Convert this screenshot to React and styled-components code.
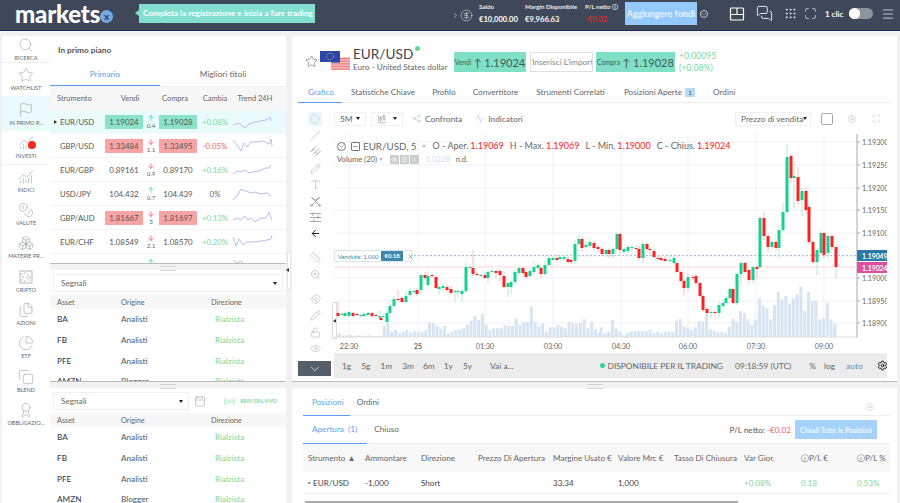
import React from "react";
import styled, { createGlobalStyle } from "styled-components";
import {
  Search, Star, Flag, ChartNoAxesCombined, Coins, Boxes, Files, PieChart, Copy, Award,
  Calendar, Settings, Eye, LockOpen, Magnet, ZoomIn, Ruler, ArrowLeft, ArrowUp, ArrowDown, Type,
  ChevronDown, Maximize, X, Menu, MessagesSquare, Grip, CandlestickChart,
  Share2, Activity, Crosshair, Slash, CircleDollarSign,
  ChevronRight, Radio, Pencil, Minus,
} from "lucide-react";

const GlobalStyle = createGlobalStyle`
  html, body { margin: 0; padding: 0; background: #f1f1f1; }
  body { font-family: Lato, "Liberation Sans", sans-serif; color: #555; }
  * { box-sizing: border-box; }
`;

const BLUE = "#5a9ff5";
const GREEN = "#7ad89b";
const RED = "#f25f5f";

const Page = styled.div`
  width: 900px;
  height: 503px;
  overflow: hidden;
  display: flex;
  flex-direction: column;
`;

/* ---------- top bar ---------- */
const TopBar = styled.header`
  height: 31px;
  flex: none;
  display: flex;
  align-items: center;
  background: #3e4858;
  border-bottom: 1px solid #1b2a52;
  color: #fff;
`;
const Logo = styled.div`
  width: 126px;
  margin-left: 15px;
  margin-top: -3px;
  display: flex;
  align-items: center;
  font-size: 24px;
  font-weight: 900;
  letter-spacing: -0.2px;
  line-height: 26px;
`;
const LogoX = styled.span`
  width: 13px;
  height: 13px;
  margin: 5px 0 0 0;
  border-radius: 50%;
  background: #74a9e6;
  color: #33405a;
  font-size: 10px;
  line-height: 12px;
  text-align: center;
  font-weight: 900;
`;
const Hint = styled.div`
  position: relative;
  width: 176px;
  height: 19px;
  margin-left: -2px;
  margin-top: -4px;
  background: #82dfd0;
  font-size: 8.2px;
  font-weight: 700;
  line-height: 19px;
  padding-left: 4px;
  white-space: nowrap;
  &::before {
    content: "";
    position: absolute;
    left: -4px;
    top: 6px;
    border: 3.5px solid transparent;
    border-left: 0;
    border-right: 4px solid #82dfd0;
  }
`;
const Account = styled.div`
  margin-left: 137px;
  display: flex;
  align-items: center;
  color: #e9ecef;
`;
const Stat = styled.div`
  width: ${(p) => p.$w}px;
  font-size: 6.2px;
  font-weight: 700;
  line-height: 11px;
  white-space: nowrap;
  margin-top: -3px;
`;
const StatValue = styled.div`
  font-size: 7.6px;
  line-height: 13px;
  margin-top: 1px;
  color: ${(p) => p.$c || "#fff"};
`;
const FundButton = styled.button`
  width: 72px;
  height: 23px;
  margin-top: -3px;
  border: 0;
  padding: 0;
  background: #94c9fb;
  color: #e8f4ff;
  font: 700 9px Lato, sans-serif;
  white-space: nowrap;
`;
const TopIcons = styled.div`
  display: flex;
  align-items: center;
  margin-top: -3px;
`;
const IconSlot = styled.span`
  display: inline-flex;
  margin-left: ${(p) => p.$ml}px;
`;
const Ring = styled.span`
  display: inline-flex;
  width: ${(p) => p.$s || 8}px;
  height: ${(p) => p.$s || 8}px;
  margin-left: ${(p) => p.$ml || 0}px;
  margin-right: ${(p) => p.$mr || 0}px;
  align-items: center;
  justify-content: center;
  border: 1px solid ${(p) => p.$c || "#ccc"};
  border-radius: ${(p) => p.$r || "50%"};
  flex: none;
`;
const OneClick = styled.span`
  margin-left: 8px;
  font-size: 8px;
  font-weight: 700;
  white-space: nowrap;
`;
const Toggle = styled.span`
  position: relative;
  width: 24px;
  height: 11px;
  margin-left: 6px;
  border-radius: 6px;
  background: #8e949c;
  &::after {
    content: "";
    position: absolute;
    left: 0;
    top: 0;
    width: 11px;
    height: 11px;
    border-radius: 50%;
    background: #fff;
  }
`;

/* ---------- layout ---------- */
const Main = styled.main`
  flex: 1;
  display: flex;
  padding: 5px 3px 0 2px;
  min-height: 0;
`;
const SideNav = styled.nav`
  width: 48px;
  flex: none;
  background: #fff;
`;
const NavItem = styled.div`
  height: ${(p) => p.$h || 33.3}px;
  position: relative;
  display: flex;
  flex-direction: column;
  align-items: center;
  justify-content: flex-end;
  padding-bottom: ${(p) => p.$pb ?? 4}px;
  background: ${(p) => (p.$active ? "#e9fbfb" : "#fff")};
  border-bottom: ${(p) => (p.$line ? "1px solid #f0f0f0" : "0")};
  color: #a4a8ac;
`;
const NavLabel = styled.span`
  font-size: 5.6px;
  line-height: 9px;
  margin-top: 0;
  color: #666;
  white-space: nowrap;
`;
const RedDot = styled.span`
  position: absolute;
  left: 26px;
  top: 10px;
  width: 8px;
  height: 8px;
  border-radius: 50%;
  background: #ec2c1f;
`;
const LeftCol = styled.section`
  width: 236px;
  flex: none;
  display: flex;
  flex-direction: column;
  position: relative;
`;
const Block = styled.div`
  height: ${(p) => p.$h}px;
  flex: none;
  overflow: hidden;
  background: #fff;
`;
const Splitter = styled.div`
  height: 7px;
  flex: none;
  position: relative;
  background: #f2f2f2;
  border-top: 1px solid #bcbcbc;
  &::after {
    content: "";
    position: absolute;
    left: 50%;
    top: 2px;
    width: 16px;
    height: 3px;
    margin-left: -8px;
    border-top: 1px solid #d4d4d4;
    border-bottom: 1px solid #d4d4d4;
  }
`;
const Collapse = styled.div`
  position: absolute;
  left: 237px;
  top: 216px;
  width: 4px;
  height: 37px;
  background: #fff;
  border: 1px solid #e6e6e6;
  &::after {
    content: "";
    position: absolute;
    left: -2px;
    top: 15px;
    border: 2px solid transparent;
    border-right: 3px solid #333;
    border-left: 0;
  }
`;
const BlockTitle = styled.div`
  height: 28px;
  padding: 9px 8px 0;
  font-size: 8.3px;
  font-weight: 700;
  color: #555;
`;
const TabsTwo = styled.div`
  height: 23px;
  display: flex;
  border-bottom: 1px solid #f0f0f0;
`;
const TabHalf = styled.div`
  width: ${(p) => p.$w}px;
  text-align: center;
  font-size: 8.3px;
  line-height: 21px;
  color: ${(p) => (p.$on ? BLUE : "#666")};
  border-bottom: ${(p) => (p.$on ? `1.5px solid ${BLUE}` : "0")};
`;
const QuoteHead = styled.div`
  height: 23px;
  display: grid;
  grid-template-columns: 55px 50px 40px 40px 40px;
  align-items: center;
  background: #f7f7f7;
  font-size: 7.5px;
  color: #666;
  text-align: center;
  span:first-child { text-align: left; padding-left: 7px; }
`;
const QuoteRow = styled.div`
  height: 24px;
  display: grid;
  grid-template-columns: 55px 38px 16px 38px 36px 43px;
  align-items: center;
  text-align: center;
  background: ${(p) => (p.$active ? "#e9fbfb" : "#fff")};
  border-bottom: 1px solid #f6f6f6;
  position: relative;
`;
const Symbol = styled.span`
  text-align: left;
  padding-left: 10px;
  font-size: 7.7px;
  position: relative;
  ${(p) =>
    p.$active &&
    `&::before {
      content: "";
      position: absolute;
      left: 4px;
      top: 3px;
      border: 2px solid transparent;
      border-left: 3px solid #333;
      border-right: 0;
    }`}
`;
const Price = styled.span`
  height: 14px;
  line-height: 14px;
  font-size: 7.9px;
  background: ${(p) => (p.$kind === "up" ? "#8be2c7" : p.$kind === "down" ? "#f9a4a4" : "transparent")};
`;
const Delta = styled.span`
  display: flex;
  flex-direction: column;
  align-items: center;
  font-size: 6.2px;
  line-height: 8px;
  color: ${(p) => p.$c};
`;
const DeltaNum = styled.span`
  color: #666;
`;
const Change = styled.span`
  font-size: 7.8px;
  color: ${(p) => p.$c};
`;
const SelectBox = styled.div`
  height: 18px;
  width: ${(p) => p.$w}px;
  padding: 0 5px 0 7px;
  display: flex;
  align-items: center;
  justify-content: space-between;
  border: 1px solid #f0f0f0;
  font-size: 8.2px;
  color: #666;
  flex: none;
`;
const Caret = styled.span`
  width: 0;
  height: 0;
  border: 2.5px solid transparent;
  border-top: 3px solid #222;
  border-bottom: 0;
`;
const SignalHead = styled.div`
  height: 14px;
  display: grid;
  grid-template-columns: 64px 90px 1fr;
  align-items: center;
  padding-left: 7px;
  background: #f7f7f7;
  font-size: 7.3px;
  color: #666;
`;
const SignalRow = styled.div`
  height: 20.7px;
  display: grid;
  grid-template-columns: 64px 94px 1fr;
  align-items: center;
  padding-left: 7px;
  font-size: 8.2px;
  color: #555;
`;
const Ticker = styled.span`
  font-weight: 500;
  color: #3d4450;
`;
const Good = styled.span`
  color: ${GREEN};
`;
const SelectRow = styled.div`
  display: flex;
  align-items: center;
  padding: 4px 0 3px 3px;
`;
const Live = styled.span`
  display: flex;
  align-items: center;
  margin-left: 17px;
  gap: 4px;
  font-size: 5px;
  font-weight: 700;
  color: ${GREEN};
  white-space: nowrap;
`;

/* ---------- right side ---------- */
const RightCol = styled.section`
  width: 605px;
  margin-left: 6px;
  flex: none;
  display: flex;
  flex-direction: column;
  background: #fff;
`;
const Upper = styled.div`
  height: 345px;
  flex: none;
`;
const InstrumentHead = styled.div`
  height: 50px;
  display: flex;
  align-items: center;
  padding: 0 0 0 13px;
`;
const NameBlock = styled.div`
  width: 101px;
  margin-left: 3px;
  margin-top: -3px;
`;
const PairName = styled.div`
  font-size: 13.6px;
  line-height: 16px;
  color: #444;
  position: relative;
`;
const LiveDot = styled.span`
  position: absolute;
  left: 62px;
  top: 0;
  width: 5px;
  height: 5px;
  border-radius: 50%;
  background: #63d98f;
`;
const PairSub = styled.div`
  font-size: 8.2px;
  line-height: 11px;
  color: #666;
  white-space: nowrap;
`;
const TradeBox = styled.div`
  width: ${(p) => p.$w}px;
  height: 20px;
  margin-left: ${(p) => p.$ml}px;
  margin-top: 2px;
  background: #7fe0c5;
  display: flex;
  align-items: center;
  justify-content: center;
  gap: 2px;
  font-size: 11px;
  color: #3f5a57;
  white-space: nowrap;
`;
const TradeLabel = styled.span`
  font-size: 6.6px;
`;
const AmountInput = styled.div`
  width: 63px;
  height: 20px;
  margin-left: 4px;
  margin-top: 2px;
  border: 1px solid #e0e0e0;
  overflow: hidden;
  white-space: nowrap;
  font-size: 8.4px;
  line-height: 18px;
  padding-left: 1px;
  color: #888;
`;
const Diff = styled.div`
  margin-left: 4px;
  margin-top: 2px;
  font-size: 8.7px;
  line-height: 12.5px;
  color: ${GREEN};
`;
const MainTabs = styled.div`
  height: 17px;
  margin: 0 7px 0 6px;
  display: flex;
  border-bottom: 1px solid #eeeeee;
`;
const MainTab = styled.div`
  height: 17px;
  margin-right: ${(p) => p.$mr}px;
  padding: 0 ${(p) => (p.$on ? 8 : 0)}px 0 ${(p) => (p.$on ? 10 : 0)}px;
  font-size: 8.2px;
  line-height: 12px;
  white-space: nowrap;
  color: ${(p) => (p.$on ? BLUE : "#666")};
  border-bottom: ${(p) => (p.$on ? `1.5px solid ${BLUE}` : "0")};
`;
const Badge = styled.span`
  display: inline-block;
  width: 10px;
  height: 9px;
  margin-left: 3px;
  background: #b7dcf8;
  font-size: 6.5px;
  line-height: 9px;
  text-align: center;
  color: #456;
`;
const ChartTools = styled.div`
  height: 31px;
  display: flex;
  align-items: center;
  padding: 0 16px;
  font-size: 8.4px;
  color: #666;
`;
const CrossBox = styled.span`
  width: 14px;
  height: 14px;
  background: #eaf7fa;
  color: #bcd;
  display: inline-flex;
  align-items: center;
  justify-content: center;
`;
const ToolSelect = styled.span`
  width: ${(p) => p.$w}px;
  height: 14px;
  margin-left: ${(p) => p.$ml}px;
  padding: 0 5px;
  display: inline-flex;
  align-items: center;
  justify-content: space-between;
  border: 1px solid #f0f0f0;
  white-space: nowrap;
  flex: none;
`;
const ToolLink = styled.span`
  display: inline-flex;
  align-items: center;
  gap: 4px;
  margin-left: ${(p) => p.$ml}px;
  white-space: nowrap;
  color: #a0a4a8;
`;
const ToolText = styled.span`
  color: #666;
`;
const Spacer = styled.span`
  flex: 1;
`;
const SquareBtn = styled.span`
  width: 12px;
  height: 12px;
  margin-left: 10px;
  border: 1px solid #aaa;
  border-radius: 2px;
  flex: none;
`;
const ChartRow = styled.div`
  height: 219px;
  display: flex;
`;
const DrawTools = styled.div`
  width: 42px;
  flex: none;
  padding-left: 18px;
  position: relative;
`;
const DrawTool = styled.div`
  height: ${(p) => p.$h || 16.4}px;
  display: flex;
  align-items: flex-end;
  color: ${(p) => p.$c || "#9a9ea3"};
`;
const HandleTab = styled.div`
  position: absolute;
  right: -3px;
  top: 168px;
  width: 5px;
  height: 37px;
  background: #fff;
  border: 1px solid #ddd;
  &::after {
    content: "";
    position: absolute;
    left: 0;
    top: 16px;
    border: 2px solid transparent;
    border-right: 3px solid #333;
    border-left: 0;
  }
`;
const ChartBox = styled.div`
  position: relative;
  width: 553px;
  height: 219px;
  flex: none;
`;
const Legend = styled.div`
  position: absolute;
  left: 3px;
  top: 5px;
  display: flex;
  align-items: center;
  font-size: 9px;
  line-height: 14px;
  color: #666;
  white-space: nowrap;
`;
const LegendName = styled.span`
  font-size: 9.8px;
  margin: 0 3px 0 3px;
`;
const LegendCaret = styled.span`
  width: 0;
  height: 0;
  margin: 0 ${(p) => p.$mr}px 0 2px;
  border: 2px solid transparent;
  border-top: 3px solid #bbb;
  border-bottom: 0;
`;
const LegendRed = styled.span`
  color: #f22;
  margin: 0 6px 0 2px;
`;
const VolumeLine = styled.div`
  position: absolute;
  left: 3px;
  top: 20px;
  display: flex;
  align-items: center;
  font-size: 7.6px;
  line-height: 10px;
  color: #666;
  white-space: nowrap;
`;
const MiniBtn = styled.span`
  width: 9px;
  height: 9px;
  margin-right: 1px;
  background: #c9cbce;
  color: #fff;
  display: inline-flex;
  align-items: center;
  justify-content: center;
`;
const OrderTag = styled.div`
  position: absolute;
  left: 0;
  top: 116px;
  width: 78px;
  height: 12px;
  display: flex;
  align-items: center;
  background: #fff;
  border: 1px solid #d7e6ef;
  font-size: 6px;
  color: #4a85a8;
  white-space: nowrap;
  padding-left: 3px;
`;
const OrderProfit = styled.span`
  margin-left: 3px;
  height: 10px;
  line-height: 10px;
  padding: 0 3px;
  background: #3f87ad;
  color: #fff;
  font-weight: 700;
`;
const RangeRow = styled.div`
  height: 25px;
  display: flex;
`;
const CollapseBtn = styled.div`
  width: 33px;
  height: 15px;
  margin: 8px 0 0 6px;
  flex: none;
  background: #565e6c;
  color: #fff;
  display: flex;
  align-items: center;
  justify-content: center;
`;
const RangeBar = styled.div`
  margin-left: 3px;
  width: 553px;
  height: 25px;
  flex: none;
  background: #ececec;
  display: flex;
  align-items: center;
  font-size: 8.4px;
  color: #666;
  white-space: nowrap;
`;
const RangeItem = styled.span`
  margin-left: ${(p) => p.$ml}px;
  color: ${(p) => p.$c || "#666"};
`;
const Available = styled.span`
  margin-left: ${(p) => p.$ml}px;
  display: inline-flex;
  align-items: center;
  gap: 3px;
  &::before {
    content: "";
    width: 5px;
    height: 5px;
    border-radius: 50%;
    background: #2ed09b;
  }
`;
const Lower = styled.div`
  flex: 1;
  min-height: 0;
  padding: 0 7px 0 11px;
  position: relative;
`;
const PosTabs = styled.div`
  height: 23px;
  margin-top: 5px;
  display: flex;
  align-items: flex-start;
  border-bottom: 1px solid #eeeeee;
  position: relative;
`;
const PosTab = styled.div`
  height: 23px;
  padding: 3px 6px 0 ${(p) => (p.$on ? 9 : 7)}px;
  font-size: 8.2px;
  line-height: 12px;
  color: ${(p) => (p.$on ? BLUE : "#666")};
  border-bottom: ${(p) => (p.$on ? `1.5px solid ${BLUE}` : "0")};
`;
const PosGear = styled.span`
  position: absolute;
  right: 15px;
  top: 3px;
  color: #bbb;
`;
const SubTabs = styled.div`
  height: 28px;
  display: flex;
  align-items: center;
  border-bottom: 1px solid #eeeeee;
`;
const SubTab = styled.div`
  height: 28px;
  line-height: 27px;
  padding: 0 10px 0 ${(p) => (p.$on ? 9 : 7)}px;
  font-size: 8.2px;
  white-space: pre;
  color: ${(p) => (p.$on ? BLUE : "#666")};
  border-bottom: ${(p) => (p.$on ? `1.5px solid ${BLUE}` : "0")};
`;
const NetPl = styled.div`
  margin-left: auto;
  font-size: 8.2px;
  white-space: nowrap;
`;
const NetPlValue = styled.span`
  color: ${RED};
`;
const CloseAll = styled.button`
  width: 82px;
  height: 19px;
  margin: 0 13px 0 4px;
  padding: 0;
  border: 0;
  background: #a5d2fb;
  color: #f0f8ff;
  font: 700 6.8px Lato, sans-serif;
  white-space: nowrap;
`;
const PosHead = styled.div`
  height: 28px;
  display: grid;
  grid-template-columns: 57px 56px 57px 75px 65px 56px 70px 57px 56px 60px;
  align-items: center;
  padding-left: 5px;
  background: #f8f8f8;
  font-size: 8.1px;
  color: #666;
  white-space: nowrap;
  overflow: hidden;
`;
const PosRow = styled.div`
  height: 22px;
  display: grid;
  grid-template-columns: 57px 56px 57px 75px 65px 56px 70px 57px 56px 60px;
  align-items: center;
  padding-left: 5px;
  border-bottom: 1px solid #f0f0f0;
  font-size: 8.1px;
  color: #444;
  white-space: nowrap;
`;
const Scroll = styled.div`
  width: 433px;
  height: 2px;
  margin: 7px 0 0 2px;
  background: #a9a9a9;
`;

/* ---------- small drawn icons ---------- */
function CryptoIcon({ size = 16 }) {
  return (
    <svg width={size} height={size} viewBox="0 0 16 16" fill="none" stroke="currentColor" strokeWidth="0.8">
      <rect x="2" y="2" width="12" height="12" />
      {[[4, 5], [7, 4], [10, 6], [5, 8], [9, 9], [12, 8], [4, 11], [7, 12], [11, 11]].map(([x, y]) => (
        <circle key={`${x}-${y}`} cx={x} cy={y} r="0.6" fill="#666" stroke="none" />
      ))}
    </svg>
  );
}

function ChannelIcon() {
  return (
    <svg width="11" height="11" viewBox="0 0 11 11" fill="none" stroke="currentColor" strokeWidth="0.9">
      <path d="M0.5 6 6 0.5M3 8.5 9 2.5M5 10.5 10.5 5M2 3l1.5 1.5M5.5 6 7 7.5" />
    </svg>
  );
}

function PatternIcon() {
  return (
    <svg width="11" height="11" viewBox="0 0 11 11" fill="none" stroke="currentColor" strokeWidth="0.9">
      <path d="M1.5 1.5 9.5 9.5M9.5 1.5 1.5 9.5M1.5 1.5 5.5 4 9.5 1.5" />
      <circle cx="1.5" cy="9.5" r="1" />
      <circle cx="9.5" cy="9.5" r="1" />
    </svg>
  );
}

function FibIcon() {
  return (
    <svg width="11" height="11" viewBox="0 0 11 11" fill="none" stroke="currentColor" strokeWidth="0.9">
      <path d="M0 1.5H11M0 5.5H11M0 9.5H11M3 0.5V4M8 3V7M4 7V10.5" />
    </svg>
  );
}

function LayoutIcon() {
  return (
    <svg width="16" height="16" viewBox="0 0 16 16" fill="none" stroke="currentColor" strokeWidth="1.2">
      <rect x="1.5" y="2" width="13" height="12" rx="1" />
      <path d="M1.5 8.5H14.5M8 2V8.5" />
    </svg>
  );
}

const navItems = [
  { label: "WATCHLIST", Icon: Star },
  { label: "IN PRIMO P...", Icon: Flag, active: true, h: 35 },
  { label: "INVESTI", Icon: ChartNoAxesCombined, dot: true, line: true },
  { label: "INDICI", Icon: ChartNoAxesCombined },
  { label: "VALUTE", Icon: Coins },
  { label: "MATERIE PR...", Icon: Boxes },
  { label: "CRIPTO", Icon: CryptoIcon },
  { label: "AZIONI", Icon: Files },
  { label: "ETF", Icon: PieChart },
  { label: "BLEND", Icon: Copy },
  { label: "OBBLIGAZIO...", Icon: Award },
];

const quotes = [
  { s: "EUR/USD", sell: "1.19024", buy: "1.19028", kind: "up", dir: 1, d: "0.4", c: "+0.08%", cc: GREEN, active: true, spark: "0,11 6,9 12,14 16,10 22,8 28,7 33,6 37,3 38,7" },
  { s: "GBP/USD", sell: "1.33484", buy: "1.33495", kind: "down", dir: -1, d: "1.1", c: "-0.05%", cc: RED, spark: "0,2 4,7 8,13 11,5 14,9 18,4 24,4 30,3 36,6 38,1 39,8" },
  { s: "EUR/GBP", sell: "0.89161", buy: "0.89170", dir: -1, d: "0.9", c: "+0.16%", cc: GREEN, spark: "0,12 4,9 8,10 12,8 16,11 20,10 26,9 32,6 36,6 38,3" },
  { s: "USD/JPY", sell: "104.432", buy: "104.439", dir: 1, d: "0.7", c: "0%", cc: "#666", spark: "0,14 4,10 8,3 13,5 18,7 22,6 28,8 34,7 38,10" },
  { s: "GBP/AUD", sell: "1.81667", buy: "1.81697", kind: "down", dir: -1, d: "3", c: "+0.13%", cc: GREEN, spark: "0,10 4,8 8,10 12,6 15,10 18,8 22,12 28,8 33,8 36,2 39,10" },
  { s: "EUR/CHF", sell: "1.08549", buy: "1.08570", dir: -1, d: "2.1", c: "+0.20%", cc: GREEN, spark: "0,3 3,12 6,5 10,11 14,8 20,8 28,7 34,6 38,5 39,1" },
  { s: "AUD/CAD", sell: "0.95540", buy: "0.95560", dir: 1, d: "0.7", c: "-0.09%", cc: RED, spark: "0,2 4,5 8,3 12,7 16,5 22,9 30,10 38,12" },
];

const signals = [
  ["BA", "Analisti"],
  ["FB", "Analisti"],
  ["PFE", "Analisti"],
  ["AMZN", "Blogger"],
];

const columns = ["Ammontare", "Direzione", "Prezzo Di Apertura", "Margine Usato €", "Valore Mrc €", "Tasso Di Chiusura", "Var Gior."];

// x, top, bottom, colour (g/r), wick high, wick low
const candles = [
  [338,313,316,"r",302,317],[342,314,315,"g",312,316],[345,313,316,"g",311,317],[349,312,316,"g",311,317],[353,313,316,"r",312,317],[357,314,315,"r",313,316],[361,315,316,"g",313,317],[364,314,316,"g",312,317],[368,313,315,"g",312,316],[372,313,316,"r",312,318],[376,315,316,"r",314,317],
  [380,316,318,"g",310,319],[383,316,317,"g",314,318],[387,313,322,"g",310,325],[381,318,320,"r",316,321],[390,306,313,"g",303,315],[394,299,306,"g",296,308],[398,299,300,"r",290,301],[402,298,302,"r",296,303],[406,296,302,"g",292,304],[410,291,295,"g",288,298],[414,291,292,"g",288,293],[417,290,294,"r",288,296],[421,275,290,"g",274,293],[425,275,278,"r",272,280],[428,276,285,"g",271,287],[432,275,276,"r",273,278],[436,277,288,"r",275,290],[439,287,289,"g",285,294],[443,286,288,"g",284,291],[447,287,290,"r",285,292],[451,289,293,"r",286,295],[455,291,292,"g",290,302],[458,291,292,"g",290,298],[462,291,294,"g",289,302],[466,267,291,"g",262,293],[470,267,268,"g",264,270],[473,268,274,"r",250,276],[477,274,275,"r",272,276],[481,275,276,"g",274,277],[485,275,278,"r",272,279],[488,272,278,"g",270,283],[492,271,272,"g",269,274],[496,271,273,"r",270,279],[500,271,275,"r",269,282],[504,276,287,"r",272,288],[508,283,287,"g",282,297],[511,282,287,"g",280,294],[515,272,282,"g",270,284],[519,268,273,"g",266,276],[523,268,273,"r",267,275],[526,272,277,"r",270,279],[530,271,276,"g",270,278],[534,267,272,"g",261,275],[538,265,268,"g",263,270],[541,268,274,"r",266,278],[545,265,274,"g",262,276],[549,258,265,"g",256,266],[553,258,260,"g",256,261],[557,258,260,"r",255,262],[560,257,259,"g",255,261],[564,257,259,"g",255,261],[568,259,262,"r",257,264],[571,260,262,"r",259,264],
  [575,244,261,"g",240,264],[579,239,244,"g",234,246],[582,239,248,"r",236,252],[586,245,247,"g",242,249],[590,242,246,"g",240,248],[594,243,248,"r",241,250],[598,247,249,"r",245,253],[602,249,254,"r",247,256],[606,250,254,"g",249,257],[609,250,254,"r",248,258],[613,249,254,"g",247,259],[617,234,249,"g",232,251],[620,234,250,"r",233,254],[624,249,252,"g",248,254],[628,247,251,"g",245,253],[632,247,248,"g",244,251],[636,248,249,"r",246,250],[639,249,258,"r",246,260],[643,244,258,"g",241,263],[647,244,249,"r",242,251],[650,249,250,"r",247,255],
  [654,251,257,"r",249,258],[658,258,259,"r",255,260],[661,258,260,"r",256,261],[665,259,261,"r",256,262],[670,260,261,"g",256,262],[674,258,263,"g",256,264],[677,263,272,"r",260,273],[681,272,281,"r",270,282],[684,281,288,"r",278,295],[688,277,288,"g",274,292],[693,277,278,"r",274,280],[696,276,283,"r",274,285],[700,283,296,"r",282,298],[703,296,310,"r",294,312],[707,309,313,"r",307,316],[711,312,313,"g",306,318],[715,312,313,"r",310,318],[719,305,313,"g",302,317],[723,303,306,"g",300,308],[726,298,303,"g",296,305],[730,289,298,"g",287,300],[733,289,303,"r",288,304],[737,274,303,"g",272,305],[741,263,274,"g",261,285],[745,263,272,"r",261,274],[749,270,280,"r",268,284],[753,267,280,"g",265,283],[757,267,269,"r",265,278],[760,218,267,"g",216,269],
  [764,218,236,"r",212,240],[768,236,247,"r",233,252],[772,242,247,"g",240,250],[776,242,248,"r",240,251],[779,230,248,"g",226,258],[783,212,230,"g",203,232],[787,157,212,"g",144,215],[791,156,178,"r",154,183],[794,176,178,"g",161,208],[798,177,201,"r",167,205],[802,191,200,"g",188,216],[806,191,210,"r",187,214],[809,207,242,"r",205,244],[813,242,262,"r",240,264],[817,250,262,"g",248,275],[821,233,253,"g",231,255],[824,233,255,"r",232,258],[828,236,253,"g",234,258],[832,236,247,"r",234,250],[836,247,267,"r",245,278],
];

const volumesA = [250,256,256,255,257,256,258,257,256,258,258,258,228,220,245,240,250,245,240,248,245,245,245,240,218,220,228,235,228,250,245,240,238,235,225,212,198,210,192,225,240,235,235,235,225,228,228,205,225,215,215,170,215,230,220,245,232,232,225,230,235,215,218,222,218,208,235,215,238,248];
const volumesB = [232,250,245,210,235,245,255,248,245,243,243,243,243,238,248,245,250,245,245,245,213,207,230,233,240,232,213,215,193,237,243,247,247,250,230,207,215,183,190,208,225,208,145,168,175,208,165,125,148,138,160,145,133,110,183,125,153,153,208,205,158,208,222];

const ticks = [[142,"1.19300"],[165,"1.19250"],[188,"1.19200"],[210,"1.19150"],[233,"1.19100"],[278,"1.19000"],[301,"1.18950"],[323,"1.18900"]];
const times = [[349,"22:30"],[418,"25"],[485,"01:30"],[553,"03:00"],[621,"04:30"],[688,"06:00"],[756,"07:30"],[824,"09:00"]];

const AxisText = styled.text`
  font: ${(p) => (p.$bold ? "700 6.9px" : "400 7.2px")} Lato, sans-serif;
  fill: ${(p) => p.$c || "#666"};
`;

function Candles() {
  return (
    <svg width="553" height="219" viewBox="334 134 553 219">
      {ticks.map(([y]) => (
        <line key={y} x1="334" x2="857" y1={y} y2={y} stroke="#f0f1f8" />
      ))}
      <line x1="334" x2="857" y1="256" y2="256" stroke="#f0f1f8" />
      {times.map(([x]) => (
        <line key={x} x1={x} x2={x} y1="134" y2="337" stroke="#f0f1f8" />
      ))}
      {volumesA.map((z, i) => (
        <rect key={i} x={337.6 + i * 3.77} y={250 + z / 3} width="3" height={(261 - z) / 3} fill="#d7e5f2" />
      ))}
      {volumesB.map((z, i) => (
        <rect key={i} x={599.6 + i * 3.77} y={250 + z / 3} width="3" height={(261 - z) / 3} fill="#d7e5f2" />
      ))}
      <line x1="334" x2="857" y1="255.5" y2="255.5" stroke="#a8c3dc" strokeDasharray="2 2" />
      <line x1="334" x2="857" y1="267" y2="267" stroke="#fbd3e2" />
      {candles.map(([x, top, bot, c, hi, lo], i) => (
        <g key={i}>
          <line x1={x} x2={x} y1={hi} y2={lo} stroke={c === "g" ? "#b5ead6" : "#fbbcbc"} />
          <rect x={x - 1.5} y={top} width="3" height={Math.max(bot - top, 1)} fill={c === "g" ? "#17cf91" : "#fb2222"} />
        </g>
      ))}
      <line x1="857" x2="857" y1="134" y2="338" stroke="#c6c6c6" strokeWidth="1.5" />
      <line x1="334" x2="857" y1="337" y2="337" stroke="#dddddd" />
      {ticks.map(([y, t]) => (
        <g key={t}>
          <line x1="857" x2="860" y1={y} y2={y} stroke="#aaa" />
          <AxisText x="862" y={y + 3}>{t}</AxisText>
        </g>
      ))}
      <rect x="857" y="250" width="30" height="11" fill="#2a7aa6" />
      <AxisText x="862" y="258.5" $c="#fff" $bold>1.19049</AxisText>
      <rect x="857" y="262" width="30" height="11" fill="#dc4f9e" />
      <AxisText x="862" y="270.5" $c="#fff" $bold>1.19024</AxisText>
      {times.map(([x, t]) => (
        <AxisText key={t} x={x} y="349" textAnchor="middle" $bold={t === "25"}>{t}</AxisText>
      ))}
    </svg>
  );
}

function Sparkline({ points }) {
  return (
    <svg width="40" height="16" viewBox="0 0 40 16">
      <polyline points={points} fill="none" stroke="#b4c0ee" strokeWidth="1" />
    </svg>
  );
}

function FlagsIcon() {
  return (
    <svg width="30" height="20" viewBox="0 0 30 20">
      <rect x="11" y="6" width="19" height="13" fill="#f4c3c3" />
      {[7, 9.6, 12.2, 14.8, 17.4].map((y) => (
        <rect key={y} x="11" y={y} width="19" height="1.3" fill="#ee8080" />
      ))}
      <rect x="11" y="6" width="9" height="6" fill="#5f86c6" />
      <rect x="0" y="0" width="20" height="11" fill="#2b45a8" />
      <circle cx="10" cy="5.5" r="3.4" fill="none" stroke="#c9bf5e" strokeWidth="0.9" strokeDasharray="1 1" />
    </svg>
  );
}

const SignalsTable = () => (
  <>
    <SignalHead>
      <span>Asset</span>
      <span>Origine</span>
      <span>Direzione</span>
    </SignalHead>
    {signals.map(([t, o]) => (
      <SignalRow key={t}>
        <Ticker>{t}</Ticker>
        <span>{o}</span>
        <Good>Rialzista</Good>
      </SignalRow>
    ))}
  </>
);

export default function App() {
  return (
    <Page>
      <GlobalStyle />
      <TopBar>
        <Logo>
          markets<LogoX>x</LogoX>
        </Logo>
        <Hint>Completa la registrazione e inizia a fare trading</Hint>
        <Account>
          <IconSlot $ml={0}><ChevronRight size={7} /></IconSlot>
          <IconSlot $ml={1}><CircleDollarSign size={13} strokeWidth={1} /></IconSlot>
          <IconSlot $ml={6} />
          <Stat $w={46}>Saldo<StatValue>€10,000.00</StatValue></Stat>
          <Stat $w={60}>Margin Disponibile<StatValue>€9,966.63</StatValue></Stat>
          <Stat $w={40}>P/L netto ⓘ<StatValue $c="#d92a2a">-€0.02</StatValue></Stat>
          <FundButton>Aggiungere fondi</FundButton>
        </Account>
        <TopIcons>
          <Ring $ml={3}><ChevronDown size={6} /></Ring>
          <IconSlot $ml={21}><LayoutIcon /></IconSlot>
          <IconSlot $ml={11}><MessagesSquare size={17} strokeWidth={1.2} /></IconSlot>
          <IconSlot $ml={11}><Grip size={13} strokeWidth={1.4} /></IconSlot>
          <IconSlot $ml={7}><Maximize size={13} strokeWidth={1.2} /></IconSlot>
          <OneClick>1 clic</OneClick>
          <Toggle />
          <IconSlot $ml={8}><Menu size={14} strokeWidth={1.2} /></IconSlot>
        </TopIcons>
      </TopBar>

      <Main>
        <SideNav>
          <NavItem $h={27} $pb={0} $line>
            <Search size={16} strokeWidth={1} />
            <NavLabel>RICERCA</NavLabel>
          </NavItem>
          {navItems.map(({ label, Icon, active, dot, line, h }) => (
            <NavItem key={label} $active={active} $line={line} $h={h}>
              <Icon size={16} strokeWidth={1} />
              {dot && <RedDot />}
              <NavLabel>{label}</NavLabel>
            </NavItem>
          ))}
        </SideNav>

        <LeftCol>
          <Block $h={227}>
            <BlockTitle>In primo piano</BlockTitle>
            <TabsTwo>
              <TabHalf $w={110} $on>Primario</TabHalf>
              <TabHalf $w={126}>Migliori titoli</TabHalf>
            </TabsTwo>
            <QuoteHead>
              <span>Strumento</span>
              <span>Vendi</span>
              <span>Compra</span>
              <span>Cambia</span>
              <span>Trend 24H</span>
            </QuoteHead>
            {quotes.map((q) => (
              <QuoteRow key={q.s} $active={q.active}>
                <Symbol $active={q.active}>{q.s}</Symbol>
                <Price $kind={q.kind}>{q.sell}</Price>
                <Delta $c={q.dir > 0 ? "#2ed09b" : "#ef4040"}>
                  {q.dir > 0 ? <ArrowUp size={8} /> : <ArrowDown size={8} />}
                  <DeltaNum>{q.d}</DeltaNum>
                </Delta>
                <Price $kind={q.kind}>{q.buy}</Price>
                <Change $c={q.cc}>{q.c}</Change>
                <Sparkline points={q.spark} />
              </QuoteRow>
            ))}
          </Block>
          <Splitter />
          <Block $h={111}>
            <SelectRow>
              <SelectBox $w={230}>
                Segnali
                <Caret />
              </SelectBox>
            </SelectRow>
            <SignalsTable />
          </Block>
          <Splitter />
          <Block $h={115}>
            <SelectRow>
              <SelectBox $w={136}>
                Segnali
                <Caret />
              </SelectBox>
              <IconSlot $ml={5}><Calendar size={12} strokeWidth={1} color="#999" /></IconSlot>
              <Live>
                <Radio size={13} strokeWidth={1} />
                XRAY DAL VIVO
              </Live>
            </SelectRow>
            <SignalsTable />
          </Block>
          <Collapse />
        </LeftCol>

        <RightCol>
          <Upper>
            <InstrumentHead>
              <Star size={13} strokeWidth={1} color="#555" />
              <IconSlot $ml={2}><FlagsIcon /></IconSlot>
              <NameBlock>
                <PairName>EUR/USD<LiveDot /></PairName>
                <PairSub>Euro - United States dollar</PairSub>
              </NameBlock>
              <TradeBox $w={72} $ml={0}>
                <TradeLabel>Vendi</TradeLabel> ↑ 1.19024
              </TradeBox>
              <AmountInput>Inserisci L'importo</AmountInput>
              <TradeBox $w={79} $ml={3}>
                <TradeLabel>Compra</TradeLabel> ↑ 1.19028
              </TradeBox>
              <Diff>+0.00095<br />(+0.08%)</Diff>
            </InstrumentHead>
            <MainTabs>
              <MainTab $on $mr={9}>Grafico</MainTab>
              <MainTab $mr={17}>Statistiche Chiave</MainTab>
              <MainTab $mr={17}>Profilo</MainTab>
              <MainTab $mr={18}>Convertitore</MainTab>
              <MainTab $mr={19}>Strumenti Correlati</MainTab>
              <MainTab $mr={18}>Posizioni Aperte<Badge>1</Badge></MainTab>
              <MainTab $mr={0}>Ordini</MainTab>
            </MainTabs>
            <ChartTools>
              <CrossBox><Crosshair size={10} strokeWidth={1} /></CrossBox>
              <ToolSelect $w={32} $ml={12}>5M <Caret /></ToolSelect>
              <ToolSelect $w={32} $ml={5}><CandlestickChart size={10} strokeWidth={1} /> <Caret /></ToolSelect>
              <ToolLink $ml={9}><Share2 size={9} strokeWidth={1} /><ToolText>Confronta</ToolText></ToolLink>
              <ToolLink $ml={13}><Activity size={9} strokeWidth={1} /><ToolText>Indicatori</ToolText></ToolLink>
              <Spacer />
              <ToolSelect $w={76} $ml={0}>Prezzo di vendita <Caret /></ToolSelect>
              <SquareBtn />
              <IconSlot $ml={14}><Settings size={10} strokeWidth={1} color="#aaa" /></IconSlot>
              <IconSlot $ml={15}><Maximize size={9} strokeWidth={1} color="#aaa" /></IconSlot>
            </ChartTools>
            <ChartRow>
              <DrawTools>
                <DrawTool $h={7}><Slash size={11} strokeWidth={1} /></DrawTool>
                <DrawTool><ChannelIcon /></DrawTool>
                <DrawTool><Pencil size={11} strokeWidth={1} /></DrawTool>
                <DrawTool><Type size={11} strokeWidth={1} /></DrawTool>
                <DrawTool><PatternIcon /></DrawTool>
                <DrawTool><FibIcon /></DrawTool>
                <DrawTool $c="#111"><ArrowLeft size={11} strokeWidth={2} /></DrawTool>
                <DrawTool $h={24}><Ruler size={11} strokeWidth={1} /></DrawTool>
                <DrawTool><ZoomIn size={11} strokeWidth={1} /></DrawTool>
                <DrawTool $h={25}><Magnet size={11} strokeWidth={1} /></DrawTool>
                <DrawTool><Pencil size={11} strokeWidth={1} /></DrawTool>
                <DrawTool><LockOpen size={11} strokeWidth={1} /></DrawTool>
                <DrawTool><Eye size={11} strokeWidth={1} /></DrawTool>
                <HandleTab />
              </DrawTools>
              <ChartBox>
                <Candles />
                <Legend>
                  <Ring $s={9} $c="#777" $mr={5}><ChevronDown size={7} /></Ring>
                  <Ring $s={9} $c="#777" $r="1px"><Minus size={7} /></Ring>
                  <LegendName>EUR/USD, 5</LegendName>
                  <LegendCaret $mr={7} />
                  O - Aper.<LegendRed>1.19069</LegendRed>
                  H - Max.<LegendRed>1.19069</LegendRed>
                  L - Min.<LegendRed>1.19000</LegendRed>
                  C - Chius.<LegendRed>1.19024</LegendRed>
                </Legend>
                <VolumeLine>
                  Volume (20)
                  <LegendCaret $mr={7} />
                  <MiniBtn><Eye size={7} /></MiniBtn>
                  <MiniBtn><Settings size={7} /></MiniBtn>
                  <MiniBtn><X size={7} /></MiniBtn>
                  <RangeItem $ml={6} $c="#cfe0ee">1.0228</RangeItem>
                  <RangeItem $ml={6}>n.d.</RangeItem>
                </VolumeLine>
                <OrderTag>
                  Vendute: 1,000
                  <OrderProfit>€0.18</OrderProfit>
                  <IconSlot $ml={4}><X size={7} /></IconSlot>
                </OrderTag>
              </ChartBox>
            </ChartRow>
            <RangeRow>
              <CollapseBtn><ChevronDown size={14} strokeWidth={1.2} /></CollapseBtn>
              <RangeBar>
                <RangeItem $ml={8}>1g</RangeItem>
                <RangeItem $ml={10}>5g</RangeItem>
                <RangeItem $ml={10}>1m</RangeItem>
                <RangeItem $ml={10}>3m</RangeItem>
                <RangeItem $ml={9}>6m</RangeItem>
                <RangeItem $ml={9}>1y</RangeItem>
                <RangeItem $ml={10}>5y</RangeItem>
                <RangeItem $ml={18}>Vai a...</RangeItem>
                <Available $ml={86}>DISPONIBILE PER IL TRADING</Available>
                <RangeItem $ml={12}>09:18:59 (UTC)</RangeItem>
                <RangeItem $ml={18}>%</RangeItem>
                <RangeItem $ml={8}>log</RangeItem>
                <RangeItem $ml={11} $c="#5b8fb5">auto</RangeItem>
                <IconSlot $ml={14}><Settings size={11} color="#111" /></IconSlot>
              </RangeBar>
            </RangeRow>
          </Upper>
          <Splitter />
          <Lower>
            <PosTabs>
              <PosTab $on>Posizioni</PosTab>
              <PosTab>Ordini</PosTab>
              <PosGear><Settings size={10} strokeWidth={1} /></PosGear>
            </PosTabs>
            <SubTabs>
              <SubTab $on>Apertura  (1)</SubTab>
              <SubTab>Chiuso</SubTab>
              <NetPl>P/L netto: <NetPlValue>-€0.02</NetPlValue></NetPl>
              <CloseAll>Chiudi Tutte le Posizioni</CloseAll>
            </SubTabs>
            <PosHead>
              <span>Strumento ▲</span>
              {columns.map((c) => <span key={c}>{c}</span>)}
              <span>ⓘP/L €</span>
              <span>ⓘP/L %</span>
            </PosHead>
            <PosRow>
              <span>‣ EUR/USD</span>
              <span>-1,000</span>
              <span>Short</span>
              <span />
              <span>33.34</span>
              <span>1,000</span>
              <span />
              <Good>+0.08%</Good>
              <Good>0.18</Good>
              <Good>0.53%</Good>
            </PosRow>
            <Scroll />
          </Lower>
        </RightCol>
      </Main>
    </Page>
  );
}
